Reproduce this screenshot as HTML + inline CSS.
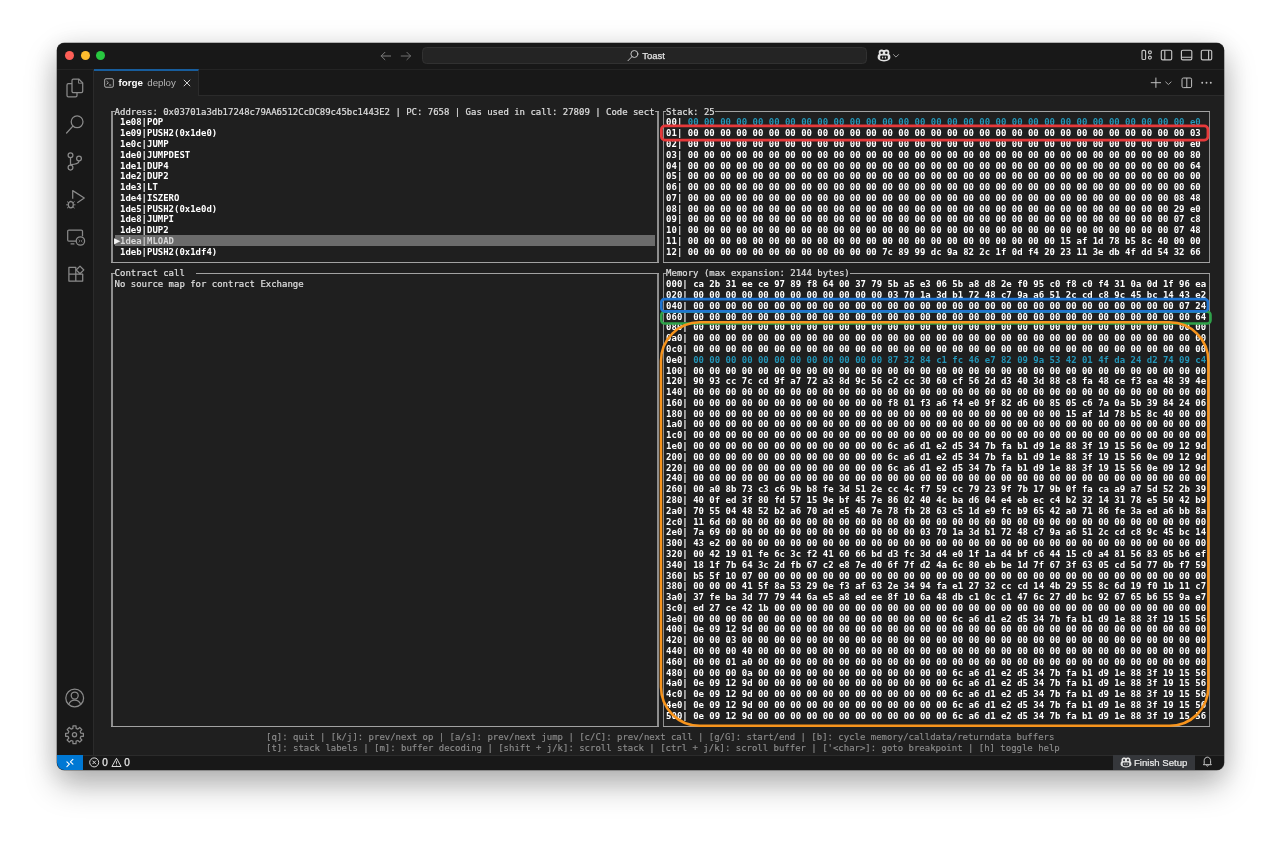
<!DOCTYPE html>
<html lang="en"><head><meta charset="utf-8"><title>forge deploy - Toast</title>
<style>
*{box-sizing:border-box;margin:0;padding:0}
html,body{width:1280px;height:841px;overflow:hidden;background:#fff}
body{position:relative;font-family:"Liberation Sans",sans-serif}
#layer{position:absolute;left:0;top:0;width:1280px;height:841px;will-change:transform}
#win{position:absolute;left:56.5px;top:42.5px;width:1167px;height:727.8px;background:#1f1f1f;border-radius:7.5px;box-shadow:0 0 0 0.5px rgba(0,0,0,.5),0 15px 32px rgba(0,0,0,.28),0 4px 30px rgba(0,0,0,.12);}
#clip{position:absolute;left:0;top:0;width:100%;height:100%;border-radius:7.5px;overflow:hidden}
.abs{position:absolute}
#titlebar{position:absolute;left:0;top:0;width:100%;height:27.4px;background:#181818;border-bottom:1px solid #242424}
#act{position:absolute;left:0;top:27.4px;width:37.2px;height:685px;background:#181818;border-right:1px solid #2b2b2b}
#tabs{position:absolute;left:37.2px;top:27.4px;right:0;height:25.8px;background:#181818;border-bottom:1px solid #2b2b2b}
#tab{position:absolute;left:0;top:-0.9px;width:105.6px;height:26.7px;background:#1f1f1f;border-top:2.1px solid #185d9c;border-right:1px solid #2b2b2b}
#status{position:absolute;left:0;top:712.2px;width:100%;height:15.7px;background:#181818;border-top:1px solid #2b2b2b}
#term{position:absolute;left:-56.5px;top:-42.5px;width:1280px;height:841px}
.t{position:absolute;white-space:pre;font-family:"DejaVu Sans Mono","Liberation Mono",monospace;font-size:8.981px;line-height:10.79px;height:10.79px;color:#e4e4e4;letter-spacing:0}
.t.b{font-weight:bold;color:#fff}
.t.n{color:#dedede;-webkit-text-stroke:0.22px #dedede}
.t.g{color:#8c8c8c;-webkit-text-stroke:0.15px #8c8c8c}
.t.cy{color:#2496b8}
.t.sel{color:#d8d8d8}
.hl{position:absolute;background:#6b6b6b}
.ln{position:absolute;background:#a2a2a2}
.ln.v{background:#8e8e8e}

.ic{position:absolute;overflow:visible}
.ic *{vector-effect:none}
#tl i{position:absolute;top:8.4px;width:9.4px;height:9.4px;border-radius:50%}
#search{position:absolute;left:365.8px;top:4.1px;width:445.2px;height:17.9px;border:1px solid #313131;border-radius:4.5px;background:#242424}
#toast{position:absolute;left:585.7px;top:7.6px;font-size:9.5px;line-height:11px;color:#e2e2e2;white-space:pre}
.lbl{position:absolute;white-space:pre;font-family:"Liberation Sans",sans-serif}
#finish{position:absolute;left:1056.2px;top:0;width:82.8px;height:15.6px;background:#35373b}

</style></head>
<body>
<div id="layer"><div id="win"><div id="clip">
<div id="titlebar"></div>
<div id="act"></div>
<div id="tabs"><div id="tab"></div></div>
<div id="status"></div>
<!-- title bar content -->
<div id="tl" class="abs" style="left:0;top:0">
<i style="left:8.5px;background:#fe5f57"></i><i style="left:24px;background:#febc2e"></i><i style="left:39.4px;background:#28c840"></i>
</div>
<svg class="ic" style="left:323.8px;top:8.5px" width="32" height="10" viewBox="0 0 32 10" fill="none" stroke="#7d7d7d" stroke-width="1" stroke-linecap="round" stroke-linejoin="round">
<path d="M1.2 5H10.6M4.9 1.3L1.2 5l3.7 3.7"/>
<path d="M21.2 5h9.4M26.9 1.3L30.6 5l-3.7 3.7" stroke="#6f6f6f"/>
</svg>
<div id="search"></div>
<svg class="ic" style="left:570.5px;top:6.5px" width="12" height="13" viewBox="0 0 12 13" fill="none" stroke="#c4c4c4" stroke-width="1" stroke-linecap="round">
<circle cx="7.4" cy="5" r="3.5"/><path d="M5 7.6L1 11.7"/>
</svg>
<div id="toast" class="lbl" style="-webkit-text-stroke:0.25px #e2e2e2">Toast</div>
<!-- copilot -->
<svg class="ic" style="left:820.1px;top:6.3px" width="14" height="13" viewBox="0 0 14 13">
<g fill="#e2e2e2">
<ellipse cx="4.6" cy="3.6" rx="2.9" ry="3"/><ellipse cx="9.4" cy="3.6" rx="2.9" ry="3"/>
<rect x="3.6" y="1" width="6.8" height="4" />
<path d="M0.6 8.2C0.6 5.6 2 4.4 3.2 4.4h7.6c1.2 0 2.6 1.2 2.6 3.8 0 1.2-0.5 1.9-1.2 2.5C10.8 11.8 8.9 12.4 7 12.4s-3.8-0.6-5.2-1.7C1.1 10.1 0.6 9.4 0.6 8.2z"/>
</g>
<g fill="#181818">
<circle cx="4.7" cy="3.7" r="1.25"/><circle cx="9.3" cy="3.7" r="1.25"/>
<path d="M3.2 7.5c0-0.700.6-1.100 1.300-1.100h5c0.700 0 1.300.4 1.300 1.100v1.900c0 .5-.3.900-.8 1.100-.9.300-1.900.5-3 .5s-2.100-.2-3-.5c-.5-.2-.8-.6-.8-1.100z"/>
</g>
<g fill="#e2e2e2"><rect x="5.100" y="7.400" width="1.100" height="2.100" rx=".5"/><rect x="7.800" y="7.400" width="1.100" height="2.100" rx=".5"/></g>
</svg>
<svg class="ic" style="left:835.8px;top:10.4px" width="8" height="6" viewBox="0 0 8 6" fill="none" stroke="#9a9a9a" stroke-width="1"><path d="M1.200 1.300l2.800 2.800 2.800-2.800"/></svg>
<!-- layout icons -->
<svg class="ic" style="left:1083px;top:5.4px" width="76" height="14" viewBox="0 0 76 14" fill="none" stroke="#c4c4c4" stroke-width="1.15">
<rect x="2" y="2.3" width="3.6" height="9.2" rx="1.1"/><circle cx="9.9" cy="4.3" r="1.5"/><circle cx="9.9" cy="9.6" r="1.5"/>
<rect x="21.3" y="2.2" width="10.4" height="9.7" rx="1.4"/><path d="M24.8 2.2v9.700"/>
<rect x="41.400" y="2.2" width="10.4" height="9.7" rx="1.4"/><path d="M41.400 9.200h10.400"/>
<rect x="61.300" y="2.2" width="10.4" height="9.7" rx="1.4"/><path d="M68.600 2.2v9.700"/>
</svg>
<!-- tab content -->
<svg class="ic" style="left:47.1px;top:35.7px" width="10" height="10" viewBox="0 0 11 11" fill="none" stroke="#c8c8c8" stroke-width="0.900">
<rect x="0.700" y="0.800" width="9.600" height="9.400" rx="1.500"/><path d="M2.800 3.400l2 1.800-2 1.800" stroke-linejoin="round"/><path d="M5.600 7.700h2.400"/>
</svg>
<div class="lbl" style="left:61.9px;top:34.3px;font-size:9.8px;line-height:12px;color:#fff;font-weight:bold">forge</div>
<div class="lbl" style="left:90.8px;top:34.5px;font-size:9.7px;line-height:12px;color:#b4b4b4">deploy</div>
<svg class="ic" style="left:126.400px;top:36.200px" width="8" height="8" viewBox="0 0 8 8" fill="none" stroke="#d0d0d0" stroke-width="1"><path d="M0.800 0.800l6.400 6.400M7.200 0.800L0.800 7.200"/></svg>
<!-- tab bar actions -->
<svg class="ic" style="left:1090px;top:33px" width="70" height="14" viewBox="0 0 70 14" fill="none" stroke="#c0c0c0" stroke-width="1">
<path d="M8.900 1.600v10.200M3.800 6.700h10.200"/>
<path d="M18.400 5.700l3 2.800 3-2.800" stroke="#a0a0a0"/>
<rect x="35" y="2" width="9.600" height="9.600" rx="1.400"/><path d="M39.800 2v9.600"/>
</svg>
<svg class="ic" style="left:1143px;top:38.500px" width="14" height="4" viewBox="0 0 14 4" fill="#c0c0c0"><circle cx="2.200" cy="1.800" r="0.950"/><circle cx="6.500" cy="1.800" r="0.950"/><circle cx="10.800" cy="1.800" r="0.950"/></svg>
<!-- activity bar icons -->
<svg class="ic" style="left:8.6px;top:34.5px" width="20" height="22" viewBox="0 0 20 22" fill="none" stroke="#8a8a8a" stroke-width="1.25" stroke-linejoin="round">
<path d="M7 14.500V3.400c0-.8.600-1.400 1.400-1.400h5.300l4 4v8.300c0 .8-.6 1.400-1.400 1.400H8.400c-.8 0-1.400-.6-1.400-1.400z"/><path d="M13.500 2v4.200h4.200" stroke-width=".9"/>
<path d="M7 6.500H3.400c-.8 0-1.400.6-1.400 1.400V18.400c0 .8.600 1.400 1.400 1.400h7.200c.8 0 1.400-.6 1.400-1.400v-2.700"/>
</svg>
<svg class="ic" style="left:8.6px;top:71.4px" width="20" height="20" viewBox="0 0 20 20" fill="none" stroke="#8a8a8a" stroke-width="1.25" stroke-linecap="round">
<circle cx="12.100" cy="7.800" r="5.900"/><path d="M7.900 12.200L1.600 19"/>
</svg>
<svg class="ic" style="left:8.6px;top:107.4px" width="20" height="22" viewBox="0 0 20 22" fill="none" stroke="#8a8a8a" stroke-width="1.25">
<circle cx="5.500" cy="5.200" r="2.400"/><circle cx="5.500" cy="17.600" r="2.400"/><circle cx="14" cy="8.500" r="2.400"/>
<path d="M5.500 7.600v7.600M14 10.900c0 3-3.500 3.400-8.500 3.700"/>
</svg>
<svg class="ic" style="left:8px;top:145px" width="22" height="22" viewBox="0 0 22 22" fill="none" stroke="#8a8a8a" stroke-width="1.25" stroke-linejoin="round">
<path d="M7.700 10.800V2.600l11.600 7.400-7 4.700"/>
<ellipse cx="5.800" cy="16.800" rx="2.500" ry="3.100" fill="#181818"/><path d="M5.800 13.700v-1M3.300 16.800H1.100M8.300 16.800h2.200M3.600 14.800L2 13.500M8 14.800l1.600-1.300M3.600 18.900L2 20.200M8 18.900l1.600 1.300" stroke-width=".9"/>
</svg>
<svg class="ic" style="left:8px;top:183px" width="22" height="20" viewBox="0 0 22 20" fill="none" stroke="#8a8a8a" stroke-width="1.25">
<path d="M12 15.100H3.900c-.7 0-1.200-.5-1.200-1.200V5.200c0-.7.500-1.200 1.200-1.200h12.400c.7 0 1.200.5 1.200 1.200v5"/><path d="M5.600 17.800h3.800"/>
<circle cx="15.400" cy="15" r="4.200" fill="#181818"/><path d="M13.700 13.600l1.400 1.400-1.400 1.400M17.300 13.700l-1.200 1.300 1.200 1.300" stroke-width=".7"/>
</svg>
<svg class="ic" style="left:9px;top:220px" width="20" height="20" viewBox="0 0 20 20" fill="none" stroke="#8a8a8a" stroke-width="1.25" stroke-linejoin="round">
<path d="M2.900 4.400h6.900v13.600H2.900zM2.900 11.200h13.800v6.800H9.800M16.700 11.200v6.800"/><rect x="11.300" y="4.200" width="5.400" height="5.400" transform="rotate(45 14 6.900)"/>
</svg>
<svg class="ic" style="left:7.5px;top:644.4px" width="22" height="22" viewBox="0 0 22 22" fill="none" stroke="#8a8a8a" stroke-width="1.25">
<circle cx="10.700" cy="11" r="8.900"/><circle cx="10.700" cy="8.500" r="3.500"/><path d="M4.700 17.400c1.100-3.200 3.600-4.300 6-4.300s4.900 1.100 6 4.300"/>
</svg>
<svg class="ic" style="left:7.6px;top:681.7px" width="22" height="22" viewBox="0 0 22 22" fill="none" stroke="#8a8a8a" stroke-width="1.25" stroke-linejoin="round">
<path d="M8.87 4.41 L8.98 1.93 L12.02 1.93 L12.13 4.41 L13.87 5.12 L15.70 3.45 L17.85 5.60 L16.18 7.43 L16.89 9.17 L19.37 9.28 L19.37 12.32 L16.89 12.43 L16.18 14.17 L17.85 16.00 L15.70 18.15 L13.87 16.48 L12.13 17.19 L12.02 19.67 L8.98 19.67 L8.87 17.19 L7.13 16.48 L5.30 18.15 L3.15 16.00 L4.82 14.17 L4.11 12.43 L1.63 12.32 L1.63 9.28 L4.11 9.17 L4.82 7.43 L3.15 5.60 L5.30 3.45 L7.13 5.12z"/><circle cx="10.500" cy="10.800" r="2.100"/>
</svg>
<!-- status bar -->
<div class="abs" style="left:0;top:712.2px;width:26.3px;height:15.7px;background:#0078d4"></div>
<svg class="ic" style="left:8.8px;top:715px" width="10" height="10" viewBox="0 0 10 10" fill="none" stroke="#fff" stroke-width="1.1" stroke-linecap="round" stroke-linejoin="round"><path d="M1.900 3.800l2.500 2.400-2.500 2.400M7.900 1.400L5.400 3.800l2.500 2.400"/></svg>
<svg class="ic" style="left:32.5px;top:714.4px" width="50" height="11" viewBox="0 0 50 11" fill="none" stroke="#dcdcdc" stroke-width="1" stroke-linejoin="round">
<circle cx="5.200" cy="5.400" r="4.500"/><path d="M3.500 3.700l3.400 3.400M6.900 3.700l-3.400 3.400"/>
<path d="M27.500 1.300l4.600 8.200h-9.200z"/><path d="M27.500 4.200v2.700M27.500 7.700v.800" stroke-width=".9"/>
</svg>
<div class="lbl" style="left:45.7px;top:714.3px;font-size:10px;line-height:11px;color:#e8e8e8;-webkit-text-stroke:0.25px #e8e8e8">0</div>
<div class="lbl" style="left:67.7px;top:714.3px;font-size:10px;line-height:11px;color:#e8e8e8;-webkit-text-stroke:0.25px #e8e8e8">0</div>
<div class="abs" style="left:1056.2px;top:712.2px;width:82.8px;height:15.7px;background:#35373b"></div>
<svg class="ic" style="left:1063px;top:714px" width="12" height="11" viewBox="0 0 14 13">
<g fill="#e2e2e2">
<ellipse cx="4.600" cy="3.600" rx="2.900" ry="3"/><ellipse cx="9.400" cy="3.600" rx="2.900" ry="3"/>
<rect x="3.600" y="1" width="6.800" height="4" />
<path d="M0.600 8.200C0.600 5.600 2 4.400 3.200 4.400h7.600c1.200 0 2.600 1.200 2.600 3.800 0 1.200-0.500 1.900-1.200 2.500C10.800 11.800 8.900 12.400 7 12.400s-3.800-0.600-5.200-1.700C1.100 10.100 0.600 9.400 0.600 8.200z"/>
</g>
<g fill="#35373b">
<circle cx="4.700" cy="3.700" r="1.250"/><circle cx="9.300" cy="3.700" r="1.250"/>
<path d="M3.200 7.500c0-0.700.6-1.100 1.300-1.100h5c0.700 0 1.300.4 1.300 1.100v1.900c0 .5-.3.900-.8 1.100-.9.300-1.900.5-3 .5s-2.100-.2-3-.5c-.5-.2-.8-.6-.8-1.100z"/>
</g>
<g fill="#e2e2e2"><rect x="5.100" y="7.400" width="1.100" height="2.100" rx=".5"/><rect x="7.800" y="7.400" width="1.100" height="2.100" rx=".5"/></g>
</svg>
<div class="lbl" style="left:1077.5px;top:714.2px;font-size:9.6px;line-height:11px;color:#ececec;-webkit-text-stroke:0.2px #ececec">Finish Setup</div>
<svg class="ic" style="left:1145px;top:713.8px" width="11" height="11" viewBox="0 0 11 11" fill="none" stroke="#d0d0d0" stroke-width=".95" stroke-linejoin="round">
<path d="M2.200 7.800V4.600c0-2 1.400-3.400 3.200-3.400s3.200 1.400 3.200 3.400v3.200l.8.900H1.400z"/><path d="M4.400 9.400c.2.600.6.800 1 .8s.8-.2 1-.8"/>
</svg>

<div id="term">
<div class="ln v" style="left:111.00px;top:110.97px;width:1.8px;height:152.51px"></div>
<div class="ln v" style="left:657.11px;top:110.97px;width:1.8px;height:152.51px"></div>
<div class="ln" style="left:111.00px;top:262.03px;width:547.91px;height:1.45px"></div>
<div class="ln" style="left:111.00px;top:110.97px;width:3.60px;height:1.45px"></div>
<div class="ln" style="left:655.31px;top:110.97px;width:3.60px;height:1.45px"></div>
<div class="t n" style="left:114.61px;top:106.55px">Address: 0x03701a3db17248c79AA6512CcDC89c45bc1443E2 | PC: 7658 | Gas used in call: 27809 | Code sect</div>
<div class="ln v" style="left:662.52px;top:110.97px;width:1.8px;height:152.51px"></div>
<div class="ln v" style="left:1208.62px;top:110.97px;width:1.8px;height:152.51px"></div>
<div class="ln" style="left:662.52px;top:262.03px;width:547.91px;height:1.45px"></div>
<div class="ln" style="left:662.52px;top:110.97px;width:3.60px;height:1.45px"></div>
<div class="ln" style="left:714.78px;top:110.97px;width:495.64px;height:1.45px"></div>
<div class="t n" style="left:666.12px;top:106.55px">Stack: 25</div>
<div class="ln v" style="left:111.00px;top:272.82px;width:1.8px;height:454.63px"></div>
<div class="ln v" style="left:657.11px;top:272.82px;width:1.8px;height:454.63px"></div>
<div class="ln" style="left:111.00px;top:726.00px;width:547.91px;height:1.45px"></div>
<div class="ln" style="left:111.00px;top:272.82px;width:3.60px;height:1.45px"></div>
<div class="ln" style="left:195.60px;top:272.82px;width:463.31px;height:1.45px"></div>
<div class="t n" style="left:114.61px;top:268.40px">Contract call</div>
<div class="ln v" style="left:662.52px;top:272.82px;width:1.8px;height:454.63px"></div>
<div class="ln v" style="left:1208.62px;top:272.82px;width:1.8px;height:454.63px"></div>
<div class="ln" style="left:662.52px;top:726.00px;width:547.91px;height:1.45px"></div>
<div class="ln" style="left:662.52px;top:272.82px;width:3.60px;height:1.45px"></div>
<div class="ln" style="left:849.96px;top:272.82px;width:360.47px;height:1.45px"></div>
<div class="t n" style="left:666.12px;top:268.40px">Memory (max expansion: 2144 bytes)</div>
<div class="t n" style="left:114.61px;top:279.19px">No source map for contract Exchange</div>
<div class="t b" style="left:120.01px;top:117.34px">1e08|POP</div>
<div class="t b" style="left:120.01px;top:128.13px">1e09|PUSH2(0x1de0)</div>
<div class="t b" style="left:120.01px;top:138.92px">1e0c|JUMP</div>
<div class="t b" style="left:120.01px;top:149.71px">1de0|JUMPDEST</div>
<div class="t b" style="left:120.01px;top:160.50px">1de1|DUP4</div>
<div class="t b" style="left:120.01px;top:171.29px">1de2|DUP2</div>
<div class="t b" style="left:120.01px;top:182.08px">1de3|LT</div>
<div class="t b" style="left:120.01px;top:192.87px">1de4|ISZERO</div>
<div class="t b" style="left:120.01px;top:203.66px">1de5|PUSH2(0x1e0d)</div>
<div class="t b" style="left:120.01px;top:214.45px">1de8|JUMPI</div>
<div class="t b" style="left:120.01px;top:225.24px">1de9|DUP2</div>
<div class="hl" style="left:114.61px;top:235.28px;width:540.70px;height:10.99px"></div>
<div class="t sel" style="left:114.01px;top:235.48px;font-size:10.5px;color:#f4f4f4">▶</div>
<div class="t b sel" style="left:120.01px;top:236.03px">1dea|MLOAD</div>
<div class="t b" style="left:120.01px;top:246.82px">1deb|PUSH2(0x1df4)</div>
<div class="t b" style="left:666.12px;top:117.34px">00|</div>
<div class="t b cy" style="left:687.75px;top:117.34px">00 00 00 00 00 00 00 00 00 00 00 00 00 00 00 00 00 00 00 00 00 00 00 00 00 00 00 00 00 00 00 e0</div>
<div class="t b" style="left:666.12px;top:128.13px">01|</div>
<div class="t b" style="left:687.75px;top:128.13px">00 00 00 00 00 00 00 00 00 00 00 00 00 00 00 00 00 00 00 00 00 00 00 00 00 00 00 00 00 00 00 03</div>
<div class="t b" style="left:666.12px;top:138.92px">02|</div>
<div class="t b" style="left:687.75px;top:138.92px">00 00 00 00 00 00 00 00 00 00 00 00 00 00 00 00 00 00 00 00 00 00 00 00 00 00 00 00 00 00 00 e0</div>
<div class="t b" style="left:666.12px;top:149.71px">03|</div>
<div class="t b" style="left:687.75px;top:149.71px">00 00 00 00 00 00 00 00 00 00 00 00 00 00 00 00 00 00 00 00 00 00 00 00 00 00 00 00 00 00 00 80</div>
<div class="t b" style="left:666.12px;top:160.50px">04|</div>
<div class="t b" style="left:687.75px;top:160.50px">00 00 00 00 00 00 00 00 00 00 00 00 00 00 00 00 00 00 00 00 00 00 00 00 00 00 00 00 00 00 00 64</div>
<div class="t b" style="left:666.12px;top:171.29px">05|</div>
<div class="t b" style="left:687.75px;top:171.29px">00 00 00 00 00 00 00 00 00 00 00 00 00 00 00 00 00 00 00 00 00 00 00 00 00 00 00 00 00 00 00 00</div>
<div class="t b" style="left:666.12px;top:182.08px">06|</div>
<div class="t b" style="left:687.75px;top:182.08px">00 00 00 00 00 00 00 00 00 00 00 00 00 00 00 00 00 00 00 00 00 00 00 00 00 00 00 00 00 00 00 60</div>
<div class="t b" style="left:666.12px;top:192.87px">07|</div>
<div class="t b" style="left:687.75px;top:192.87px">00 00 00 00 00 00 00 00 00 00 00 00 00 00 00 00 00 00 00 00 00 00 00 00 00 00 00 00 00 00 08 48</div>
<div class="t b" style="left:666.12px;top:203.66px">08|</div>
<div class="t b" style="left:687.75px;top:203.66px">00 00 00 00 00 00 00 00 00 00 00 00 00 00 00 00 00 00 00 00 00 00 00 00 00 00 00 00 00 00 29 e0</div>
<div class="t b" style="left:666.12px;top:214.45px">09|</div>
<div class="t b" style="left:687.75px;top:214.45px">00 00 00 00 00 00 00 00 00 00 00 00 00 00 00 00 00 00 00 00 00 00 00 00 00 00 00 00 00 00 07 c8</div>
<div class="t b" style="left:666.12px;top:225.24px">10|</div>
<div class="t b" style="left:687.75px;top:225.24px">00 00 00 00 00 00 00 00 00 00 00 00 00 00 00 00 00 00 00 00 00 00 00 00 00 00 00 00 00 00 07 48</div>
<div class="t b" style="left:666.12px;top:236.03px">11|</div>
<div class="t b" style="left:687.75px;top:236.03px">00 00 00 00 00 00 00 00 00 00 00 00 00 00 00 00 00 00 00 00 00 00 00 15 af 1d 78 b5 8c 40 00 00</div>
<div class="t b" style="left:666.12px;top:246.82px">12|</div>
<div class="t b" style="left:687.75px;top:246.82px">00 00 00 00 00 00 00 00 00 00 00 00 7c 89 99 dc 9a 82 2c 1f 0d f4 20 23 11 3e db 4f dd 54 32 66</div>
<div class="t b" style="left:666.12px;top:279.19px">000|</div>
<div class="t b" style="left:693.16px;top:279.19px">ca 2b 31 ee ce 97 89 f8 64 00 37 79 5b a5 e3 06 5b a8 d8 2e f0 95 c0 f8 c0 f4 31 0a 0d 1f 96 ea</div>
<div class="t b" style="left:666.12px;top:289.98px">020|</div>
<div class="t b" style="left:693.16px;top:289.98px">00 00 00 00 00 00 00 00 00 00 00 00 03 70 1a 3d b1 72 48 c7 9a a6 51 2c cd c8 9c 45 bc 14 43 e2</div>
<div class="t b" style="left:666.12px;top:300.77px">040|</div>
<div class="t b" style="left:693.16px;top:300.77px">00 00 00 00 00 00 00 00 00 00 00 00 00 00 00 00 00 00 00 00 00 00 00 00 00 00 00 00 00 00 07 24</div>
<div class="t b" style="left:666.12px;top:311.56px">060|</div>
<div class="t b" style="left:693.16px;top:311.56px">00 00 00 00 00 00 00 00 00 00 00 00 00 00 00 00 00 00 00 00 00 00 00 00 00 00 00 00 00 00 00 64</div>
<div class="t b" style="left:666.12px;top:322.35px">080|</div>
<div class="t b" style="left:693.16px;top:322.35px">00 00 00 00 00 00 00 00 00 00 00 00 00 00 00 00 00 00 00 00 00 00 00 00 00 00 00 00 00 00 00 00</div>
<div class="t b" style="left:666.12px;top:333.14px">0a0|</div>
<div class="t b" style="left:693.16px;top:333.14px">00 00 00 00 00 00 00 00 00 00 00 00 00 00 00 00 00 00 00 00 00 00 00 00 00 00 00 00 00 00 00 00</div>
<div class="t b" style="left:666.12px;top:343.93px">0c0|</div>
<div class="t b" style="left:693.16px;top:343.93px">00 00 00 00 00 00 00 00 00 00 00 00 00 00 00 00 00 00 00 00 00 00 00 00 00 00 00 00 00 00 00 00</div>
<div class="t b" style="left:666.12px;top:354.72px">0e0|</div>
<div class="t b cy" style="left:693.16px;top:354.72px">00 00 00 00 00 00 00 00 00 00 00 00 87 32 84 c1 fc 46 e7 82 09 9a 53 42 01 4f da 24 d2 74 09 c4</div>
<div class="t b" style="left:666.12px;top:365.51px">100|</div>
<div class="t b" style="left:693.16px;top:365.51px">00 00 00 00 00 00 00 00 00 00 00 00 00 00 00 00 00 00 00 00 00 00 00 00 00 00 00 00 00 00 00 00</div>
<div class="t b" style="left:666.12px;top:376.30px">120|</div>
<div class="t b" style="left:693.16px;top:376.30px">90 93 cc 7c cd 9f a7 72 a3 8d 9c 56 c2 cc 30 60 cf 56 2d d3 40 3d 88 c8 fa 48 ce f3 ea 48 39 4e</div>
<div class="t b" style="left:666.12px;top:387.09px">140|</div>
<div class="t b" style="left:693.16px;top:387.09px">00 00 00 00 00 00 00 00 00 00 00 00 00 00 00 00 00 00 00 00 00 00 00 00 00 00 00 00 00 00 00 00</div>
<div class="t b" style="left:666.12px;top:397.88px">160|</div>
<div class="t b" style="left:693.16px;top:397.88px">00 00 00 00 00 00 00 00 00 00 00 00 f8 01 f3 a6 f4 e0 9f 82 d6 00 85 05 c6 7a 0a 5b 39 84 24 06</div>
<div class="t b" style="left:666.12px;top:408.67px">180|</div>
<div class="t b" style="left:693.16px;top:408.67px">00 00 00 00 00 00 00 00 00 00 00 00 00 00 00 00 00 00 00 00 00 00 00 15 af 1d 78 b5 8c 40 00 00</div>
<div class="t b" style="left:666.12px;top:419.46px">1a0|</div>
<div class="t b" style="left:693.16px;top:419.46px">00 00 00 00 00 00 00 00 00 00 00 00 00 00 00 00 00 00 00 00 00 00 00 00 00 00 00 00 00 00 00 00</div>
<div class="t b" style="left:666.12px;top:430.25px">1c0|</div>
<div class="t b" style="left:693.16px;top:430.25px">00 00 00 00 00 00 00 00 00 00 00 00 00 00 00 00 00 00 00 00 00 00 00 00 00 00 00 00 00 00 00 00</div>
<div class="t b" style="left:666.12px;top:441.04px">1e0|</div>
<div class="t b" style="left:693.16px;top:441.04px">00 00 00 00 00 00 00 00 00 00 00 00 6c a6 d1 e2 d5 34 7b fa b1 d9 1e 88 3f 19 15 56 0e 09 12 9d</div>
<div class="t b" style="left:666.12px;top:451.83px">200|</div>
<div class="t b" style="left:693.16px;top:451.83px">00 00 00 00 00 00 00 00 00 00 00 00 6c a6 d1 e2 d5 34 7b fa b1 d9 1e 88 3f 19 15 56 0e 09 12 9d</div>
<div class="t b" style="left:666.12px;top:462.62px">220|</div>
<div class="t b" style="left:693.16px;top:462.62px">00 00 00 00 00 00 00 00 00 00 00 00 6c a6 d1 e2 d5 34 7b fa b1 d9 1e 88 3f 19 15 56 0e 09 12 9d</div>
<div class="t b" style="left:666.12px;top:473.41px">240|</div>
<div class="t b" style="left:693.16px;top:473.41px">00 00 00 00 00 00 00 00 00 00 00 00 00 00 00 00 00 00 00 00 00 00 00 00 00 00 00 00 00 00 00 00</div>
<div class="t b" style="left:666.12px;top:484.20px">260|</div>
<div class="t b" style="left:693.16px;top:484.20px">00 a0 8b 73 c3 c6 9b b8 fe 3d 51 2e cc 4c f7 59 cc 79 23 9f 7b 17 9b 0f fa ca a9 a7 5d 52 2b 39</div>
<div class="t b" style="left:666.12px;top:494.99px">280|</div>
<div class="t b" style="left:693.16px;top:494.99px">40 0f ed 3f 80 fd 57 15 9e bf 45 7e 86 02 40 4c ba d6 04 e4 eb ec c4 b2 32 14 31 78 e5 50 42 b9</div>
<div class="t b" style="left:666.12px;top:505.78px">2a0|</div>
<div class="t b" style="left:693.16px;top:505.78px">70 55 04 48 52 b2 a6 70 ad e5 40 7e 78 fb 28 63 c5 1d e9 fc b9 65 42 a0 71 86 fe 3a ed a6 bb 8a</div>
<div class="t b" style="left:666.12px;top:516.57px">2c0|</div>
<div class="t b" style="left:693.16px;top:516.57px">11 6d 00 00 00 00 00 00 00 00 00 00 00 00 00 00 00 00 00 00 00 00 00 00 00 00 00 00 00 00 00 00</div>
<div class="t b" style="left:666.12px;top:527.36px">2e0|</div>
<div class="t b" style="left:693.16px;top:527.36px">7a 69 00 00 00 00 00 00 00 00 00 00 00 00 03 70 1a 3d b1 72 48 c7 9a a6 51 2c cd c8 9c 45 bc 14</div>
<div class="t b" style="left:666.12px;top:538.15px">300|</div>
<div class="t b" style="left:693.16px;top:538.15px">43 e2 00 00 00 00 00 00 00 00 00 00 00 00 00 00 00 00 00 00 00 00 00 00 00 00 00 00 00 00 00 00</div>
<div class="t b" style="left:666.12px;top:548.94px">320|</div>
<div class="t b" style="left:693.16px;top:548.94px">00 42 19 01 fe 6c 3c f2 41 60 66 bd d3 fc 3d d4 e0 1f 1a d4 bf c6 44 15 c0 a4 81 56 83 05 b6 ef</div>
<div class="t b" style="left:666.12px;top:559.73px">340|</div>
<div class="t b" style="left:693.16px;top:559.73px">18 1f 7b 64 3c 2d fb 67 c2 e8 7e d0 6f 7f d2 4a 6c 80 eb be 1d 7f 67 3f 63 05 cd 5d 77 0b f7 59</div>
<div class="t b" style="left:666.12px;top:570.52px">360|</div>
<div class="t b" style="left:693.16px;top:570.52px">b5 5f 10 07 00 00 00 00 00 00 00 00 00 00 00 00 00 00 00 00 00 00 00 00 00 00 00 00 00 00 00 00</div>
<div class="t b" style="left:666.12px;top:581.31px">380|</div>
<div class="t b" style="left:693.16px;top:581.31px">00 00 00 41 5f 8a 53 29 0e f3 af 63 2e 34 94 fa e1 27 32 cc cd 14 4b 29 55 8c 6d 19 f0 1b 11 c7</div>
<div class="t b" style="left:666.12px;top:592.10px">3a0|</div>
<div class="t b" style="left:693.16px;top:592.10px">37 fe ba 3d 77 79 44 6a e5 a8 ed ee 8f 10 6a 48 db c1 0c c1 47 6c 27 d0 bc 92 67 65 b6 55 9a e7</div>
<div class="t b" style="left:666.12px;top:602.89px">3c0|</div>
<div class="t b" style="left:693.16px;top:602.89px">ed 27 ce 42 1b 00 00 00 00 00 00 00 00 00 00 00 00 00 00 00 00 00 00 00 00 00 00 00 00 00 00 00</div>
<div class="t b" style="left:666.12px;top:613.68px">3e0|</div>
<div class="t b" style="left:693.16px;top:613.68px">00 00 00 00 00 00 00 00 00 00 00 00 00 00 00 00 6c a6 d1 e2 d5 34 7b fa b1 d9 1e 88 3f 19 15 56</div>
<div class="t b" style="left:666.12px;top:624.47px">400|</div>
<div class="t b" style="left:693.16px;top:624.47px">0e 09 12 9d 00 00 00 00 00 00 00 00 00 00 00 00 00 00 00 00 00 00 00 00 00 00 00 00 00 00 00 00</div>
<div class="t b" style="left:666.12px;top:635.26px">420|</div>
<div class="t b" style="left:693.16px;top:635.26px">00 00 03 00 00 00 00 00 00 00 00 00 00 00 00 00 00 00 00 00 00 00 00 00 00 00 00 00 00 00 00 00</div>
<div class="t b" style="left:666.12px;top:646.05px">440|</div>
<div class="t b" style="left:693.16px;top:646.05px">00 00 00 40 00 00 00 00 00 00 00 00 00 00 00 00 00 00 00 00 00 00 00 00 00 00 00 00 00 00 00 00</div>
<div class="t b" style="left:666.12px;top:656.84px">460|</div>
<div class="t b" style="left:693.16px;top:656.84px">00 00 01 a0 00 00 00 00 00 00 00 00 00 00 00 00 00 00 00 00 00 00 00 00 00 00 00 00 00 00 00 00</div>
<div class="t b" style="left:666.12px;top:667.63px">480|</div>
<div class="t b" style="left:693.16px;top:667.63px">00 00 00 0a 00 00 00 00 00 00 00 00 00 00 00 00 6c a6 d1 e2 d5 34 7b fa b1 d9 1e 88 3f 19 15 56</div>
<div class="t b" style="left:666.12px;top:678.42px">4a0|</div>
<div class="t b" style="left:693.16px;top:678.42px">0e 09 12 9d 00 00 00 00 00 00 00 00 00 00 00 00 6c a6 d1 e2 d5 34 7b fa b1 d9 1e 88 3f 19 15 56</div>
<div class="t b" style="left:666.12px;top:689.21px">4c0|</div>
<div class="t b" style="left:693.16px;top:689.21px">0e 09 12 9d 00 00 00 00 00 00 00 00 00 00 00 00 6c a6 d1 e2 d5 34 7b fa b1 d9 1e 88 3f 19 15 56</div>
<div class="t b" style="left:666.12px;top:700.00px">4e0|</div>
<div class="t b" style="left:693.16px;top:700.00px">0e 09 12 9d 00 00 00 00 00 00 00 00 00 00 00 00 6c a6 d1 e2 d5 34 7b fa b1 d9 1e 88 3f 19 15 56</div>
<div class="t b" style="left:666.12px;top:710.79px">500|</div>
<div class="t b" style="left:693.16px;top:710.79px">0e 09 12 9d 00 00 00 00 00 00 00 00 00 00 00 00 6c a6 d1 e2 d5 34 7b fa b1 d9 1e 88 3f 19 15 56</div>
<div class="t g" style="left:266.00px;top:732.37px">[q]: quit | [k/j]: prev/next op | [a/s]: prev/next jump | [c/C]: prev/next call | [g/G]: start/end | [b]: cycle memory/calldata/returndata buffers</div>
<div class="t g" style="left:266.00px;top:743.16px">[t]: stack labels | [m]: buffer decoding | [shift + j/k]: scroll stack | [ctrl + j/k]: scroll buffer | [&#x27;&lt;char&gt;]: goto breakpoint | [h] toggle help</div>
</div>
<svg id="ann" style="position:absolute;left:-56.5px;top:-42.5px;pointer-events:none" width="1280" height="841" viewBox="0 0 1280 841">
<rect x="661.30" y="311.80" width="549.20" height="11.65" rx="3.20" fill="none" stroke="#2fa24a" stroke-width="2.6"/>
<rect x="661.30" y="299.10" width="546.60" height="12.25" rx="3.20" fill="none" stroke="#1f74d0" stroke-width="2.6"/>
<rect x="660.98" y="322.27" width="547.35" height="403.55" rx="38.73" fill="none" stroke="#f7941d" stroke-width="2.55"/>
<rect x="661.38" y="125.88" width="546.55" height="14.25" rx="3.62" fill="none" stroke="#e6393a" stroke-width="2.75"/>
</svg>

</div></div></div>
</body></html>
